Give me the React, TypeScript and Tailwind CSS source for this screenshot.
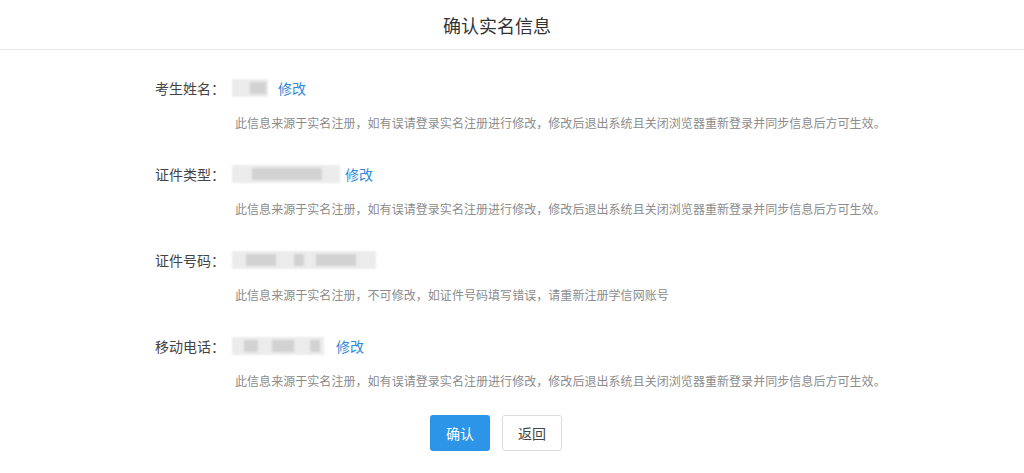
const desc =
	"此信息来源于实名注册，如有误请登录实名注册进行修改，修改后退出系统且关闭浏览器重新登录并同步信息后方可生效。";

const Blur = ({ w, blocks }: { w: number; blocks: [number, number][] }) => (
	<div className="relative h-[18px] bg-[#ececec] blur-[1px]" style={{ width: w }}>
		{blocks.map(([l, bw], i) => (
			<div
				key={i}
				className="absolute top-[3px] h-[12px] bg-[#d2d2d2]"
				style={{ left: l, width: bw }}
			/>
		))}
	</div>
);

const rows = [
	{ label: "考生姓名：", w: 36, blocks: [[18, 16]] as [number, number][], gap: "ml-[10px]", edit: true, text: desc },
	{ label: "证件类型：", w: 108, blocks: [[20, 50], [70, 20]] as [number, number][], gap: "ml-[5px]", edit: true, text: desc },
	{
		label: "证件号码：",
		w: 144,
		blocks: [[14, 30], [62, 10], [84, 40]] as [number, number][],
		gap: "",
		edit: false,
		text: "此信息来源于实名注册，不可修改，如证件号码填写错误，请重新注册学信网账号",
	},
	{ label: "移动电话：", w: 92, blocks: [[12, 14], [40, 22], [78, 10]] as [number, number][], gap: "ml-[12px]", edit: true, text: desc },
];

export default function App() {
	return (
		<div
			className="w-[1024px] h-[473px] bg-white overflow-hidden"
			style={{ fontFamily: '"Microsoft YaHei", "Noto Sans CJK SC", sans-serif' }}
		>
			<div className="h-[50px] border-b border-[#e8e8e8] flex items-center justify-center pr-[30px]">
				<h1 className="text-[18px] text-[#333] leading-none">确认实名信息</h1>
			</div>
			<div className="pl-[155px] pt-[28px] flex flex-col">
				{rows.map((r) => (
					<div key={r.label} className="flex flex-col mb-[33px]">
						<div className="flex items-center h-[20px]">
							<span className="w-[77px] text-[14px] text-[#444]">{r.label}</span>
							<Blur w={r.w} blocks={r.blocks} />
							{r.edit && (
								<a className={`${r.gap} text-[14px] text-[#2f8ad8]`}>修改</a>
							)}
						</div>
						<p className="ml-[80px] mt-[17px] h-[16px] leading-[16px] text-[12px] tracking-[0.05px] text-[#8c8c8c]">
							{r.text}
						</p>
					</div>
				))}
			</div>
			<div className="flex justify-center gap-[12px] -mt-[7px] pr-[32px]">
				<button className="w-[60px] h-[36px] rounded-[3px] bg-[#2c95e8] text-white text-[14px]">
					确认
				</button>
				<button className="w-[60px] h-[36px] rounded-[3px] border border-[#dcdcdc] bg-white text-[#444] text-[14px]">
					返回
				</button>
			</div>
		</div>
	);
}
